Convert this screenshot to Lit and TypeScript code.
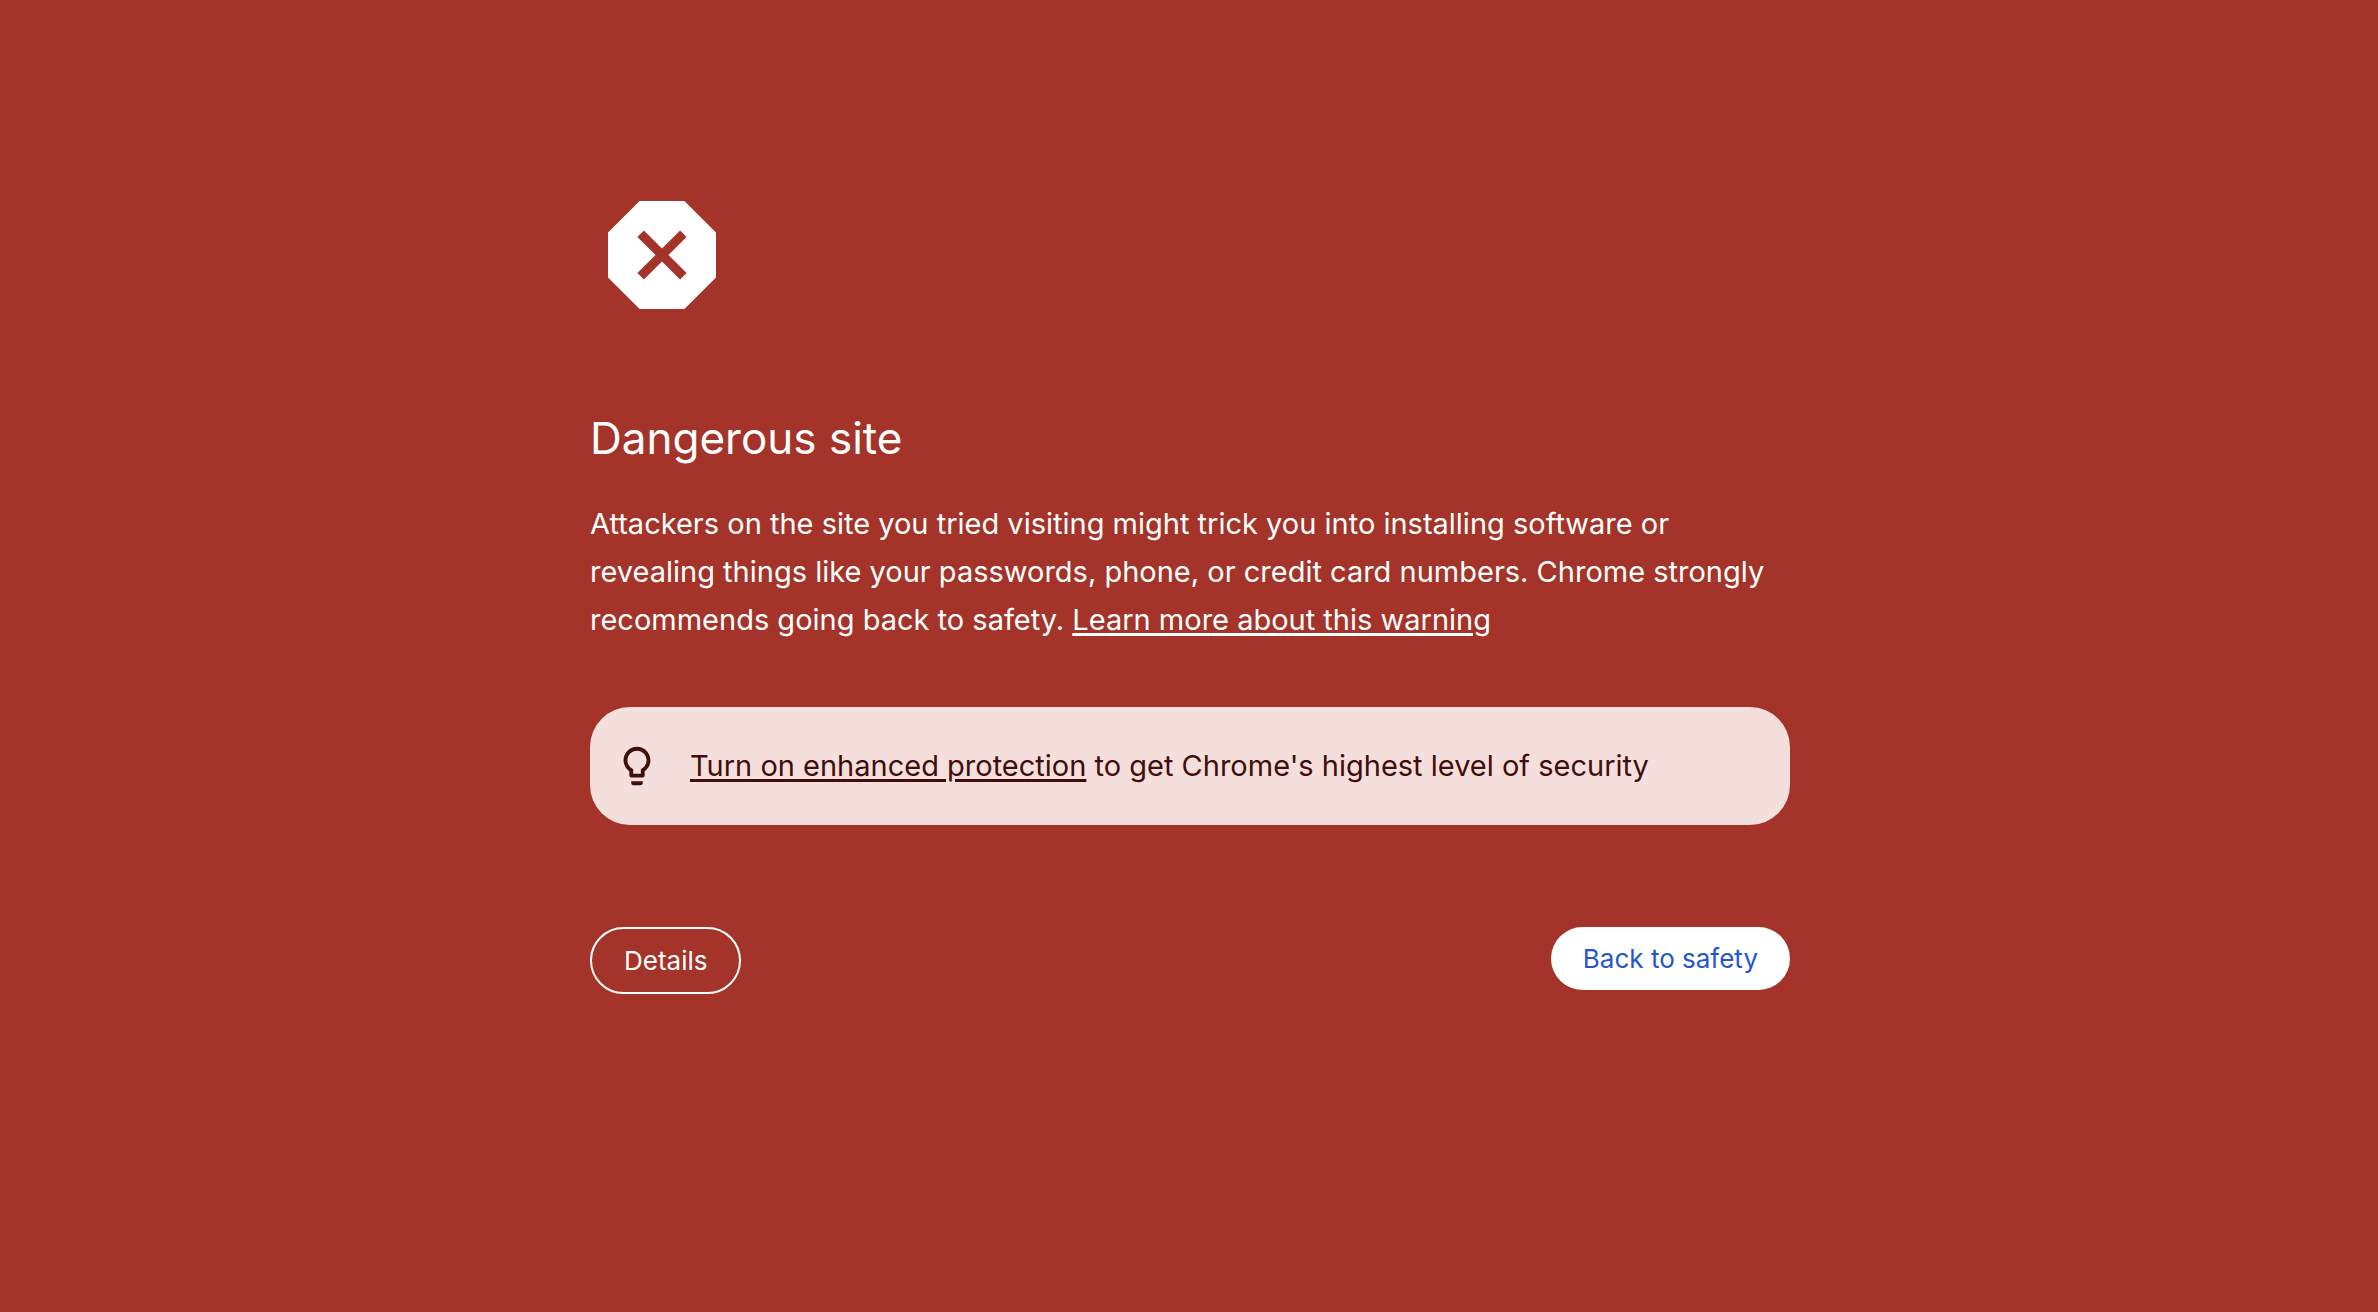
import { LitElement, html, css } from "lit";
import { customElement } from "lit/decorators.js";

@customElement("app-root")
export class AppRoot extends LitElement {
  static styles = css`
    :host {
      display: block;
      box-sizing: border-box;
      min-height: 100vh;
      padding: 183px 32px 96px 34px;
      background: #a43429;
      color: #fff;
      font-family: Inter, "Liberation Sans", sans-serif;
      font-size: 29px;
      line-height: 48px;
    }
    .content {
      max-width: 1200px;
      margin: 0 auto;
    }
    .danger-icon {
      display: block;
      width: 144px;
      height: 144px;
      fill: #fff;
    }
    h1 {
      margin: 79px 0 30px;
      font-size: 44px;
      font-weight: 400;
      line-height: 64px;
    }
    p {
      margin: 0;
    }
    a {
      color: inherit;
      text-decoration-thickness: 3px;
      text-underline-offset: 3px;
    }
    .tip {
      display: flex;
      align-items: center;
      gap: 30px;
      margin: 63px 0 102px;
      padding: 35px 24px;
      border-radius: 40px;
      background: #f4dfdc;
      color: #410e0b;
    }
    .tip-icon {
      flex: none;
      width: 46px;
      height: 46px;
      fill: currentColor;
    }
    .actions {
      display: flex;
      justify-content: space-between;
      align-items: flex-start;
      gap: 24px;
    }
    button {
      padding: 16px 32px;
      border: 0;
      border-radius: 40px;
      background: #fff;
      color: #2456cc;
      font: inherit;
      font-size: 26px;
      line-height: 31px;
      cursor: pointer;
    }
    .details {
      border: 2px solid #fff;
      background: transparent;
      color: #fff;
    }
  `;

  render() {
    return html`
      <main class="content">
        <svg class="danger-icon" viewBox="0 0 24 24" aria-hidden="true">
          <path
            fill-rule="evenodd"
            d="M15.73 3H8.27L3 8.27v7.46L8.27 21h7.46L21 15.73V8.27zM16.1 15.02l-1.08 1.08L12 13.08 8.98 16.1 7.9 15.02 10.92 12 7.9 8.98 8.98 7.9 12 10.92 15.02 7.9l1.08 1.08L13.08 12z"
          />
        </svg>
        <h1>Dangerous site</h1>
        <p>
          Attackers on the site you tried visiting might trick you into
          installing software or revealing things like your passwords, phone, or
          credit card numbers. Chrome strongly recommends going back to safety.
          <a href="#learn-more">Learn more about this warning</a>
        </p>
        <div class="tip">
          <svg class="tip-icon" viewBox="0 0 24 24" aria-hidden="true">
            <path
              d="M9 21c0 .55.45 1 1 1h4c.55 0 1-.45 1-1v-1H9v1zm3-19C8.14 2 5 5.14 5 9c0 2.38 1.19 4.47 3 5.74V17c0 .55.45 1 1 1h6c.55 0 1-.45 1-1v-2.26c1.81-1.27 3-3.36 3-5.74 0-3.86-3.14-7-7-7zm2.85 11.1l-.85.6V16h-4v-2.3l-.85-.6C7.8 12.16 7 10.63 7 9c0-2.76 2.24-5 5-5s5 2.24 5 5c0 1.63-.8 3.16-2.15 4.1z"
            />
          </svg>
          <p>
            <a href="#enhanced-protection">Turn on enhanced protection</a> to get
            Chrome's highest level of security
          </p>
        </div>
        <div class="actions">
          <button class="details" type="button">Details</button>
          <button type="button">Back to safety</button>
        </div>
      </main>
    `;
  }
}
